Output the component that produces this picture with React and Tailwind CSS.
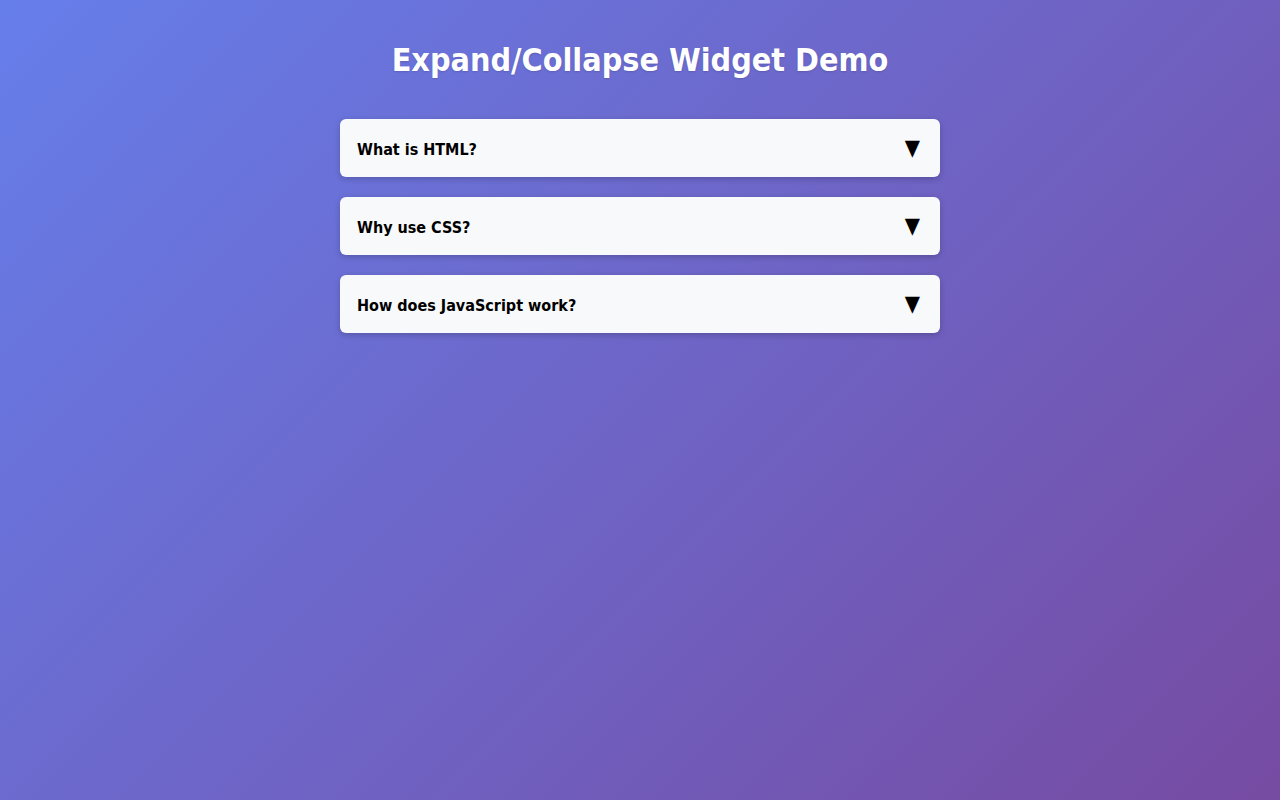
import React, { useState } from "react";

const items = [
  { q: "What is HTML?", a: "HTML is the standard markup language for creating web pages." },
  { q: "Why use CSS?", a: "CSS is used to style and lay out web pages." },
  { q: "How does JavaScript work?", a: "JavaScript runs in the browser and makes pages interactive." },
];

function Item({ q, a }) {
  const [open, setOpen] = useState(false);
  return (
    <div className="bg-[#f8f9fa] rounded-md shadow-[0_2px_6px_rgba(0,0,0,0.2)] overflow-hidden">
      <button
        onClick={() => setOpen(!open)}
        className="w-full h-[58px] flex items-center justify-between pl-[17px] pr-5 pt-[3px] text-left cursor-pointer"
      >
        <span className="text-base font-bold text-black">{q}</span>
        <span className="text-[22px] leading-none text-black -mt-[4px]">▼</span>
      </button>
      {open && <div className="px-[17px] pb-4 text-[15px] text-gray-700">{a}</div>}
    </div>
  );
}

export default function App() {
  return (
    <main
      className="min-h-screen bg-[linear-gradient(135deg,#667eea_0%,#764ba2_100%)] pt-[42px]"
      style={{ fontFamily: '"DejaVu Sans Condensed", "DejaVu Sans", sans-serif' }}
    >
      <h1 className="text-[32px] font-bold text-white text-center leading-[37px] [text-shadow:0_1px_2px_rgba(0,0,0,0.15)]">
        Expand/Collapse Widget Demo
      </h1>
      <div className="w-[600px] mx-auto mt-[40px] flex flex-col gap-5">
        {items.map((it) => (
          <Item key={it.q} {...it} />
        ))}
      </div>
    </main>
  );
}
